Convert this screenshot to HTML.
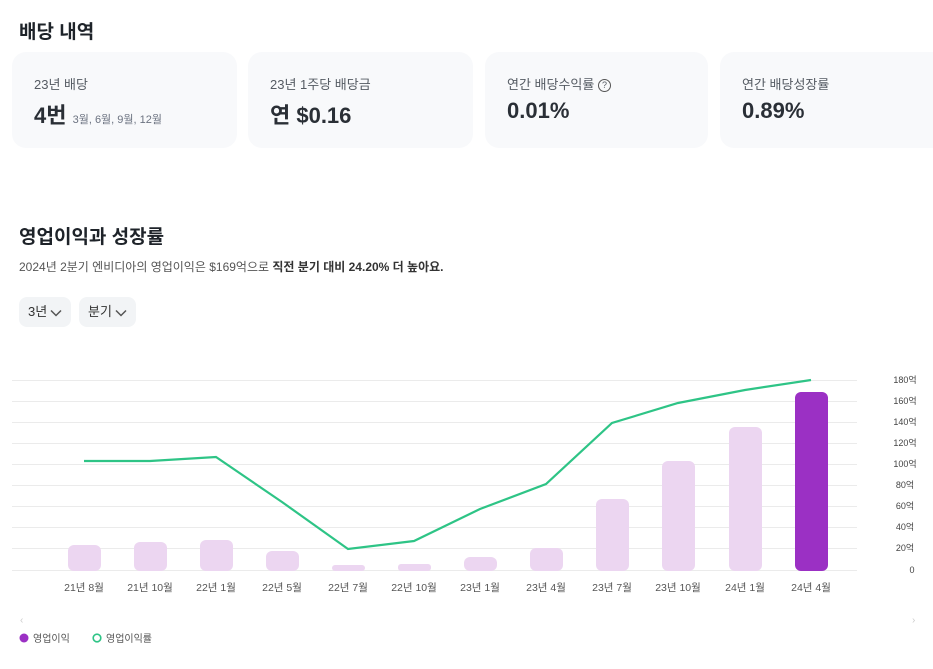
<!DOCTYPE html>
<html><head><meta charset="utf-8"><style>
body{margin:0;width:933px;height:669px;overflow:hidden;background:#fff;font-family:"Liberation Sans","Noto Sans CJK KR",sans-serif;color:#1e2329;position:relative}
.a{position:absolute}
.card{position:absolute;top:52px;height:96px;background:#f8f9fb;border-radius:14px}
.lab{position:absolute;left:22px;top:22px;font-size:13px;color:#555b63}
.val{position:absolute;left:22px;top:46px;font-size:22px;font-weight:bold;color:#2a2f36}
.btn{position:absolute;top:297px;height:30px;background:#f2f4f6;border-radius:8px;font-size:13px;line-height:30px;padding:0 9px;color:#333}
.btn svg{vertical-align:middle;margin-left:3px}
</style></head><body>
<div class="a" style="left:19px;top:17px;font-size:19px;font-weight:bold">배당 내역</div>
<div class="card" style="left:12px;width:225px"><div class="lab">23년 배당</div><div class="val">4번 <span style="font-size:11px;font-weight:normal;color:#6b7280">3월, 6월, 9월, 12월</span></div></div>
<div class="card" style="left:248px;width:225px"><div class="lab">23년 1주당 배당금</div><div class="val">연 $0.16</div></div>
<div class="card" style="left:485px;width:223px"><div class="lab">연간 배당수익률 <span style="display:inline-block;width:11px;height:11px;border:1px solid #555;border-radius:50%;font-size:9px;line-height:11px;text-align:center;vertical-align:1px">?</span></div><div class="val">0.01%</div></div>
<div class="card" style="left:720px;width:230px"><div class="lab">연간 배당성장률</div><div class="val">0.89%</div></div>
<div class="a" style="left:19px;top:222px;font-size:19px;font-weight:bold">영업이익과 성장률</div>
<div class="a" style="left:19px;top:258px;font-size:12px;color:#555">2024년 2분기 엔비디아의 영업이익은 $169억으로 <b style="color:#333">직전 분기 대비 24.20% 더 높아요.</b></div>
<div class="btn" style="left:19px">3년<svg width="12" height="8" viewBox="0 0 12 8"><path d="M1 1.5L6 6.5L11 1.5" fill="none" stroke="#555" stroke-width="1.5"/></svg></div>
<div class="btn" style="left:79px">분기<svg width="12" height="8" viewBox="0 0 12 8"><path d="M1 1.5L6 6.5L11 1.5" fill="none" stroke="#555" stroke-width="1.5"/></svg></div>
<svg class="a" style="left:0;top:360px" width="933" height="300">
<g stroke="#ebebeb" stroke-width="1">
<line x1="12" x2="857" y1="20.5" y2="20.5"/><line x1="12" x2="857" y1="41.5" y2="41.5"/><line x1="12" x2="857" y1="62.5" y2="62.5"/><line x1="12" x2="857" y1="83.5" y2="83.5"/><line x1="12" x2="857" y1="104.5" y2="104.5"/><line x1="12" x2="857" y1="125.5" y2="125.5"/><line x1="12" x2="857" y1="146.5" y2="146.5"/><line x1="12" x2="857" y1="167.5" y2="167.5"/><line x1="12" x2="857" y1="188.5" y2="188.5"/><line x1="12" x2="857" y1="210.5" y2="210.5"/>
</g>
<g fill="#ecd6f1">
<rect x="68" y="185" width="33" height="26" rx="6"/><rect x="134" y="182" width="33" height="29" rx="6"/><rect x="200" y="180" width="33" height="31" rx="6"/><rect x="266" y="191" width="33" height="20" rx="6"/><rect x="332" y="205" width="33" height="6" rx="3"/><rect x="398" y="204" width="33" height="7" rx="3"/><rect x="464" y="197" width="33" height="14" rx="6"/><rect x="530" y="188" width="33" height="23" rx="6"/><rect x="596" y="139" width="33" height="72" rx="6"/><rect x="662" y="101" width="33" height="110" rx="6"/><rect x="729" y="67" width="33" height="144" rx="6"/>
</g>
<rect x="795" y="32" width="33" height="179" rx="6" fill="#9b30c4"/>
<polyline fill="none" stroke="#2ec486" stroke-width="2.2" points="84,101 150,101 216,97 282,142 348,189 414,181 480,149 546,124 612,63 678,43 745,30 811,20"/>
<g font-size="9" fill="#444" text-anchor="middle" font-family="Liberation Sans,Noto Sans CJK KR,sans-serif">
<text x="905" y="23">180억</text><text x="905" y="44">160억</text><text x="905" y="65">140억</text><text x="905" y="86">120억</text><text x="905" y="107">100억</text><text x="905" y="128">80억</text><text x="905" y="149">60억</text><text x="905" y="170">40억</text><text x="905" y="191">20억</text><text x="912" y="213">0</text>
</g>
<g font-size="10.5" fill="#555" text-anchor="middle" font-family="Liberation Sans,Noto Sans CJK KR,sans-serif">
<text x="84" y="231">21년 8월</text><text x="150" y="231">21년 10월</text><text x="216" y="231">22년 1월</text><text x="282" y="231">22년 5월</text><text x="348" y="231">22년 7월</text><text x="414" y="231">22년 10월</text><text x="480" y="231">23년 1월</text><text x="546" y="231">23년 4월</text><text x="612" y="231">23년 7월</text><text x="678" y="231">23년 10월</text><text x="745" y="231">24년 1월</text><text x="811" y="231">24년 4월</text>
</g>
<text x="20" y="263" font-size="10" fill="#ccc">‹</text><text x="912" y="263" font-size="10" fill="#ccc">›</text>
<circle cx="24" cy="278" r="4.5" fill="#9b30c4"/>
<circle cx="97" cy="278" r="3.8" fill="none" stroke="#2ec486" stroke-width="1.6"/>
<g font-size="10" fill="#555" font-family="Liberation Sans,Noto Sans CJK KR,sans-serif"><text x="33" y="282">영업이익</text><text x="106" y="282">영업이익률</text></g>
</svg>
</body></html>
